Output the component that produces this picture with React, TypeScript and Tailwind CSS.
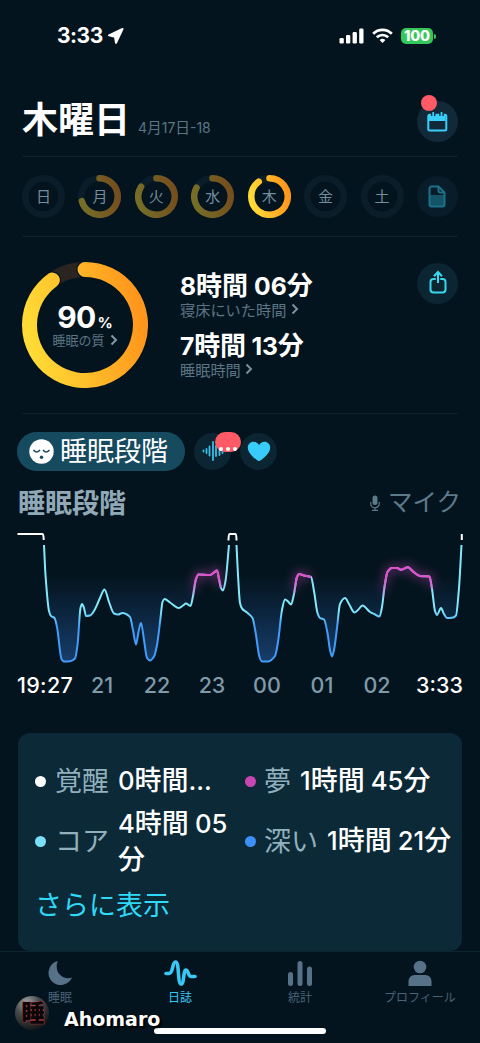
type Point = [number, number];

const DAYS: { label: string; value: number; active?: boolean }[] = [
  { label: "日", value: 0 },
  { label: "月", value: 0.71 },
  { label: "火", value: 0.84 },
  { label: "水", value: 0.83 },
  { label: "木", value: 0.9, active: true },
  { label: "金", value: 0 },
  { label: "土", value: 0 },
];

const HOURS = ["21", "22", "23", "00", "01", "02"];

// first half of the night, up to the short wake up
const NIGHT_A: Point[] = [
  [44, 25], [45.5, 55], [49, 91], [51, 96], [54.5, 98], [57, 107], [61.5, 139], [64, 141.5],
  [70, 141.2], [75, 138.5], [77.5, 125], [80.5, 88], [82, 84], [84, 88], [86, 96], [90, 95.5], [94, 91],
  [100, 78], [104.5, 69.5], [109, 82], [114, 93.5], [118, 94.5], [122.5, 93], [126, 94], [130, 97],
  [133, 110], [136, 124.5], [138.5, 112], [141, 103], [144, 120], [147, 138], [150, 140.5],
  [154, 136.5], [157, 125], [160.5, 98], [162.5, 82], [164.5, 79], [170, 82.5], [179, 88],
  [183, 85.5], [186, 83.5], [190.5, 86], [193, 76], [196, 59], [198.5, 54.5], [210, 55], [214, 52.5],
  [217, 50.5], [219, 59], [221, 68], [223, 70.5], [225.5, 61], [229, 25],
];

const NIGHT_B: Point[] = [
  [236.5, 25], [238, 55], [240, 83], [242, 88.5], [247, 92.5], [252.5, 98], [255.5, 112], [259.5, 137], [262, 141.5],
  [268, 141.5], [275, 136], [278, 122], [282, 90], [285, 79.5], [288, 81.5], [291, 84.5], [294, 74],
  [297, 57], [299, 54], [304, 55.5], [311, 57], [314, 71], [317.5, 93], [320, 98], [324, 99.5],
  [327.5, 113], [330, 130], [332, 136.5], [334, 130], [337, 108], [340, 84], [345, 78], [349, 84],
  [354.5, 92.5], [358, 90], [362.5, 85.5], [370, 92], [375, 94.5], [379.5, 96.5], [382, 87], [384.5, 67], [387.5, 52],
  [392, 48], [397, 48], [401, 49.8], [408, 47.2], [413, 51.5], [420, 56], [429.5, 56.5], [432, 69],
  [435, 91], [437, 95], [441, 88], [444, 94], [447, 98], [452, 97.8], [456, 95.5], [459, 68], [461.5, 25],
];

const REM_RANGES: [Point[], number, number][] = [
  [NIGHT_A, 193, 221],
  [NIGHT_B, 294, 311],
  [NIGHT_B, 382, 432],
];

// joins the points with horizontal tangents limited, so that the line never overshoots
function smooth(points: Point[]): string {
  const slope = points.map((p, i) => {
    if (i === 0 || i === points.length - 1) {
      const [a, b] = i === 0 ? [points[0], points[1]] : [points[i - 1], p];
      return (b[1] - a[1]) / (b[0] - a[0]);
    }
    const before = (p[1] - points[i - 1][1]) / (p[0] - points[i - 1][0]);
    const after = (points[i + 1][1] - p[1]) / (points[i + 1][0] - p[0]);
    return before * after <= 0 ? 0 : (2 * before * after) / (before + after);
  });

  return points.reduce((d, [x, y], i) => {
    if (i === 0) return `M${x} ${y}`;
    const [px, py] = points[i - 1];
    const h = (x - px) / 3;
    return `${d}C${px + h} ${py + slope[i - 1] * h} ${x - h} ${y - slope[i] * h} ${x} ${y}`;
  }, "");
}

// digits are set a bit smaller than the kanji beside them
function Text({ children }: { children: string }) {
  return (
    <>
      {children.split(/([\d.:-]+)/).map((part, i) =>
        i % 2 ? (
          <span key={i} className="text-[0.95em] font-[Inter]">
            {part}
          </span>
        ) : (
          part
        )
      )}
    </>
  );
}

function Ring({ size, stroke, value, track, big }: {
  size: number;
  stroke: number;
  value: number;
  track: string;
  big?: boolean;
}) {
  const r = (size - stroke) / 2;
  const c = size / 2;
  const end = value * Math.PI * 2;
  const x = c + r * Math.sin(end);
  const y = c - r * Math.cos(end);
  const arc = `M${c} ${c - r}A${r} ${r} 0 1 1 ${x} ${y}`;

  return (
    <svg width={size} height={size} fill="none" className="col-start-1 row-start-1">
      <circle cx={c} cy={c} r={r} stroke={track} strokeWidth={stroke} />
      {value > 0 && (
        <>
          {big && <path d={arc} stroke="#04141f" strokeWidth={stroke + 2.5} strokeLinecap="round" />}
          <path d={arc} stroke="url(#gold)" strokeWidth={stroke} strokeLinecap="round" />
        </>
      )}
    </svg>
  );
}

function Chevron({ className }: { className: string }) {
  return (
    <svg viewBox="0 0 8 12" className={className} fill="none" stroke="currentColor" strokeWidth="2">
      <path d="M1.5 1.5 6 6l-4.5 4.5" />
    </svg>
  );
}

function StatusBar() {
  return (
    <div className="flex h-[72px] items-center justify-between pl-[57px] pr-[44px]">
      <div className="flex items-center gap-[4px]">
        <span className="font-[Inter] text-[21px] leading-6 font-bold tracking-[-0.5px]">3:33</span>
        <svg width="18" height="18" viewBox="0 0 18 18" fill="#fff" stroke="#fff" strokeWidth="2" strokeLinejoin="round">
          <path d="M15.500 2 2 8.300 8 9.800 9 15.800Z" />
        </svg>
      </div>
      <div className="flex items-center">
        <svg width="25" height="16" fill="#fff">
          <rect x="0.500" y="10" width="4.300" height="5.500" rx="1.300" />
          <rect x="7" y="7" width="4.300" height="8.500" rx="1.300" />
          <rect x="13.600" y="4" width="4.300" height="11.500" rx="1.300" />
          <rect x="20.200" y="0.500" width="4.300" height="15" rx="1.300" />
        </svg>
        <svg width="21" height="16" viewBox="0 0 21 16" className="ml-[8px]" fill="none" stroke="#fff" strokeWidth="2.700">
          <path d="M1.200 5.700a13.200 13.200 0 0 1 18.600 0M4.800 9.300a8.200 8.200 0 0 1 11.400 0" />
          <path d="M10.500 15 7.600 12.100a4.200 4.200 0 0 1 5.800 0Z" fill="#fff" stroke="none" />
        </svg>
        <div className="ml-2 flex h-4 w-8 items-center justify-center rounded-[5px] bg-[#34c759] font-[Inter] text-[14.5px] font-extrabold leading-none tracking-[-0.2px]">
          100
        </div>
        <div className="ml-px h-[5px] w-[2px] rounded-r-full bg-[#34c759]" />
      </div>
    </div>
  );
}

function Header() {
  return (
    <header className="mx-[22px] flex h-[85px] justify-between border-b border-[#0f202b]">
      <div className="flex items-baseline pt-[19px]">
        <h1 className="text-[36px] leading-[52px] font-bold">木曜日</h1>
        <span className="ml-[8px] text-[14.700px] text-[#5b7584]">
          <Text>4月17日-18</Text>
        </span>
      </div>
      <div className="relative mt-[29px] flex size-[41px] items-center justify-center rounded-full bg-[#12293a]">
        <svg width="21" height="20" fill="none" stroke="#38d0fb" strokeWidth="2">
          <rect x="1.300" y="2.800" width="18" height="15.700" rx="1.500" />
          <path d="M2 3h16.500v6H2z" fill="#38d0fb" stroke="none" />
          <path d="M6.200 0v4M14.500 0v4" stroke="#12293a" strokeWidth="4.500" />
          <path d="M6.200.5v3M14.500.5v3" strokeLinecap="round" strokeWidth="1.800" />
        </svg>
        <span className="absolute -top-[6px] left-[4px] size-[16px] rounded-full bg-[#ff5a66]" />
      </div>
    </header>
  );
}

function Week() {
  return (
    <div className="mx-[22px] flex h-[80px] items-center justify-between border-b border-[#0f202b]">
      {DAYS.map(({ label, value, active }) => (
        <div key={label} className="grid place-items-center">
          <div className={active ? "col-start-1 row-start-1" : "col-start-1 row-start-1 opacity-45"}>
            <Ring size={43} stroke={6.5} value={value} track={active ? "#0b1f2b" : "#122a38"} />
          </div>
          <span className="col-start-1 row-start-1 mb-[3px] text-[15px] leading-none text-[#728d9c]">{label}</span>
        </div>
      ))}
      <div className="flex size-[41px] items-center justify-center rounded-full bg-[#081d29]">
        <svg width="18" height="23" viewBox="0 0 18 23" fill="none" stroke="#1b7287" strokeWidth="2">
          <path d="M2 10h14v11H2z" fill="#155366" stroke="none" />
          <path d="M10.500 1.500H3.500a2 2 0 0 0-2 2v16a2 2 0 0 0 2 2h11a2 2 0 0 0 2-2v-12Z" strokeLinejoin="round" />
          <path d="M10.500 1.500v4a2 2 0 0 0 2 2h4" />
        </svg>
      </div>
    </div>
  );
}

function Summary() {
  return (
    <section className="mx-[22px] flex h-[177px] border-b border-[#0f202b]">
      <div className="mt-[25px] grid h-[126px] w-[126px] place-items-center">
        <Ring size={126} stroke={15} value={0.9} track="#2a2520" big />
        <div className="col-start-1 row-start-1 flex flex-col items-center">
          <div className="flex h-[28px] items-baseline font-[Inter] font-bold leading-[28px]">
            <span className="text-[30px] tracking-[-0.8px]">90</span>
            <span className="ml-[2px] text-[15px]">%</span>
          </div>
          <div className="mt-px flex items-center gap-[5px] text-[13px] leading-4 text-[#5b7584]">
            睡眠の質
            <Chevron className="h-[12px] w-[8px] text-[#8499a5]" />
          </div>
        </div>
      </div>
      <div className="mt-[33px] ml-[32px] flex-1">
        <p className="text-[26px] leading-[28px] font-bold"><Text>8時間 06分</Text></p>
        <p className="flex h-[18px] items-center gap-[5px] text-[15.200px] leading-[18px] text-[#5b7584]">
          寝床にいた時間
          <Chevron className="h-[12px] w-[8px] text-[#7b919d]" />
        </p>
        <p className="mt-[12px] text-[26px] leading-[28px] font-bold tracking-[-0.2px]"><Text>7時間 13分</Text></p>
        <p className="flex h-[18px] items-center gap-[4px] text-[15.200px] leading-[18px] text-[#5b7584]">
          睡眠時間
          <Chevron className="h-[12px] w-[8px] text-[#7b919d]" />
        </p>
      </div>
      <button className="mt-[26px] flex size-[41px] items-center justify-center rounded-full bg-[#0b2532]">
        <svg width="18" height="24" viewBox="0 0 18 24" fill="none" stroke="#38d7f0" strokeWidth="2" className="-mt-[3px]">
          <path d="M6 9H4.500a3 3 0 0 0-3 3v7.500a3 3 0 0 0 3 3h9a3 3 0 0 0 3-3V12a3 3 0 0 0-3-3H12" strokeLinecap="round" />
          <path d="M9 13V2.500M5 6.200 9 2l4 4.200" />
        </svg>
      </button>
    </section>
  );
}

function Tabs() {
  return (
    <div className="mt-[17px] ml-[17px] flex h-[40px] items-center">
      <div className="flex h-[39px] w-[168px] items-center rounded-full bg-[#164a5f] pl-[12px]">
        <svg width="25" height="25" viewBox="0 0 25 25" fill="none" stroke="#164a5f" strokeWidth="1.700" strokeLinecap="round">
          <circle cx="12.500" cy="12.500" r="12.200" fill="#fff" stroke="none" />
          <path d="M5 11.500q2.500 3 5.500 0M14.500 11.500q2.500 3 5.500 0" />
          <circle cx="12.500" cy="18.300" r="1.700" fill="#164a5f" stroke="none" />
        </svg>
        <span className="mb-[4px] ml-[6px] text-[27px] leading-[35px]">睡眠段階</span>
      </div>
      <div className="relative ml-[9px] flex size-[37px] items-center justify-center rounded-full bg-[#0b2532]">
        <svg width="22" height="20" stroke="#38bfe8" strokeWidth="1.800" strokeLinecap="round">
          <path d="M1.500 9.500v1M4.500 8v4M7.500 5.500v9M11 1v18M14 5v10M17.500 6v8M20.500 8v4" />
        </svg>
        <span className="absolute -top-px left-[21px] flex h-[20px] w-[26px] items-end justify-center gap-[3px] rounded-full bg-[#ff5a66] pb-px">
          <i className="size-[4px] rounded-full bg-white" />
          <i className="size-[4px] rounded-full bg-white" />
          <i className="size-[4px] rounded-full bg-white" />
        </span>
      </div>
      <div className="ml-[9px] flex size-[37px] items-center justify-center rounded-full bg-[#0b2532]">
        <svg width="24" height="21" viewBox="0 0 24 21" fill="#38ccfb">
          <path d="M12 20.200C10.800 20.200.8 13.200.8 6.800.8 3.200 3.400.8 6.500.8c2.400 0 4.300 1.300 5.500 3.300C13.200 2.100 15.100.8 17.500.8c3.100 0 5.700 2.400 5.700 6 0 6.400-10 13.400-11.200 13.400Z" />
        </svg>
      </div>
    </div>
  );
}

function Chart() {
  return (
    <svg width="480" height="148" viewBox="0 0 480 148" fill="none" className="block">
      <defs>
        <linearGradient id="line" gradientUnits="userSpaceOnUse" x1="0" y1="90" x2="0" y2="106">
          <stop offset="0" stopColor="#82e9fb" />
          <stop offset="1" stopColor="#429dfa" />
        </linearGradient>
        <linearGradient id="valley" gradientUnits="userSpaceOnUse" x1="0" y1="55" x2="0" y2="142">
          <stop offset="0" stopColor="#143a66" stopOpacity="0" />
          <stop offset="1" stopColor="#173d6b" />
        </linearGradient>
        <linearGradient id="rem" gradientUnits="userSpaceOnUse" x1="0" y1="58" x2="0" y2="80">
          <stop offset="0" stopColor="#e14fcb" />
          <stop offset="1" stopColor="#e14fcb" stopOpacity="0" />
        </linearGradient>
        <filter id="glow" x="-50%" y="-50%" width="200%" height="200%">
          <feGaussianBlur stdDeviation="5" />
        </filter>
      </defs>
      {[NIGHT_A, NIGHT_B].map((night, i) => (
        <g key={i}>
          <path d={`${smooth(night)}Z`} fill="url(#valley)" />
          <path d={smooth(night)} stroke="url(#line)" strokeWidth="2" />
        </g>
      ))}
      {REM_RANGES.map(([night, from, to]) => {
        const d = smooth(night.filter(([x]) => x >= from && x <= to));
        return (
          <g key={from}>
            <path d={d} stroke="url(#rem)" strokeWidth="7" opacity="0.35" filter="url(#glow)" />
            <path d={d} stroke="url(#rem)" strokeWidth="2.200" />
          </g>
        );
      })}
      {/* awake */}
      <path d="M17.500 14H42.500q1.200 0 1.200 6M228.500 20.500q0-6.500 1-6.500h6q1 0 1 6.500M461.800 14v6" stroke="#fff" strokeWidth="2" />
    </svg>
  );
}

function Stages() {
  return (
    <section>
      <div className="mt-[10px] mr-[19px] ml-[18px] flex h-[39px] items-center justify-between">
        <h2 className="mt-px text-[27px] leading-[39px] font-bold text-[#91a9b7]">睡眠段階</h2>
        <div className="flex items-center text-[#5c7a8a]">
          <svg width="10" height="16" viewBox="0 0 10 16" fill="none" stroke="currentColor" className="mt-[5px]">
            <rect x="2.500" y="0.500" width="5" height="9.500" rx="2.500" fill="currentColor" stroke="none" />
            <path d="M.7 7v1.500a4.300 4.300 0 0 0 8.600 0V7M5 13v2M2 15.300h6" strokeWidth="1.200" />
          </svg>
          <span className="ml-[8px] text-[24.500px] leading-[39px]">マイク</span>
        </div>
      </div>
      <Chart />
      <div className="mx-[17px] grid h-[34px] grid-cols-[57.5px_repeat(6,55px)_1fr] items-center text-center font-[Inter] text-[21.500px] font-medium">
        <span className="text-left tracking-[0.3px]">19:27</span>
        {HOURS.map((hour) => (
          <span key={hour} className="text-[#7f9aa8]">{hour}</span>
        ))}
        <span className="text-right">3:33</span>
      </div>
    </section>
  );
}

function Legend() {
  return (
    <section className="mx-[18px] mt-[31px] h-[218px] rounded-[12px] bg-[#0b2937] pl-[17px] text-[27px] leading-[34px]">
      <div className="grid grid-cols-[210px_1fr] grid-rows-[60px_60px] pt-[17px] whitespace-nowrap">
        <div className="flex items-center">
          <i className="mt-[2px] size-[11px] rounded-full bg-white" />
          <span className="ml-[9px] text-[#91afbc]">覚醒</span>
          <span className="ml-[9px] font-medium"><Text>0時間...</Text></span>
        </div>
        <div className="flex items-center">
          <i className="mt-[2px] size-[11px] rounded-full bg-[#c846b4]" />
          <span className="ml-[8px] text-[#91afbc]">夢</span>
          <span className="ml-[9px] font-medium"><Text>1時間 45分</Text></span>
        </div>
        <div className="flex items-center">
          <i className="mt-[2px] size-[11px] rounded-full bg-[#7bdffa]" />
          <span className="ml-[9px] text-[#91afbc]">コア</span>
          <span className="ml-[9px] font-medium">
            <Text>4時間 05</Text>
            <br />分
          </span>
        </div>
        <div className="flex items-center">
          <i className="mt-[2px] size-[11px] rounded-full bg-[#3d8ffa]" />
          <span className="ml-[8px] text-[#91afbc]">深い</span>
          <span className="ml-[9px] font-medium"><Text>1時間 21分</Text></span>
        </div>
      </div>
      <a className="mt-[17px] block text-[#2fd9f7]">さらに表示</a>
    </section>
  );
}

function NavBar() {
  return (
    <nav className="grid h-[92px] grid-cols-4 border-t border-[#0d2531] text-[12px] leading-[16px] text-[#4a6277]">
      <div className="flex flex-col items-center pt-[8px]">
        <svg width="25" height="26" viewBox="0 0 25 26" fill="#577188">
          <path d="M8.800 1.300A12.200 12.200 0 1 0 24 17.500C15 20.500 6 12.500 9.400 2c.2-.6 0-.9-.6-.7Z" />
        </svg>
        <span className="mt-[3px]">睡眠</span>
      </div>
      <div className="flex flex-col items-center pt-[8px] text-[#38c8f5]">
        <svg width="33" height="26" viewBox="0 0 33 26" fill="none" stroke="currentColor" strokeWidth="3.600" strokeLinecap="round" strokeLinejoin="round">
          <path d="M2 13.500h3c4.500 0 3-11.500 6.500-11.500 4 0 2 22 5.500 22s2-14 5-14c2.500 0 2 6.500 5 6.500h4" />
        </svg>
        <span className="mt-[3px]">日誌</span>
      </div>
      <div className="flex flex-col items-center pt-[8px]">
        <svg width="26" height="26" fill="#577188">
          <rect x="1" y="12" width="5" height="14" rx="2.500" />
          <rect x="10.500" y="1" width="5" height="25" rx="2.500" />
          <rect x="20" y="6.500" width="5" height="19.500" rx="2.500" />
        </svg>
        <span className="mt-[3px]">統計</span>
      </div>
      <div className="flex flex-col items-center pt-[8px]">
        <svg width="24" height="26" fill="#577188">
          <circle cx="12" cy="7" r="6.300" />
          <path d="M.5 26v-5a6 6 0 0 1 6-6h11a6 6 0 0 1 6 6v5Z" />
        </svg>
        <span className="mt-[3px]">プロフィール</span>
      </div>
    </nav>
  );
}

export default function App() {
  return (
    <main className="relative flex h-[1043px] w-[480px] flex-col overflow-hidden bg-[#04141e] font-['Noto_Sans_CJK_JP',sans-serif] text-white">
      <svg width="0" height="0" className="absolute">
        <linearGradient id="gold" x1="0" y1="0.600" x2="1" y2="0.400">
          <stop offset="0" stopColor="#ffdb35" />
          <stop offset="1" stopColor="#ff961c" />
        </linearGradient>
      </svg>
      <StatusBar />
      <Header />
      <Week />
      <Summary />
      <Tabs />
      <Stages />
      <Legend />
      <NavBar />

      <div className="absolute bottom-[9px] left-[154px] h-[6px] w-[172px] rounded-full bg-white" />

      {/* signature */}
      <div className="absolute bottom-[12px] left-[14px] flex items-center">
        <svg width="36" height="36" viewBox="0 0 36 36" overflow="visible">
          <defs>
            <radialGradient id="ball" cx="0.350" cy="0.200" r="0.800">
              <stop offset="0" stopColor="#a2a6a8" />
              <stop offset="0.450" stopColor="#484b4d" />
              <stop offset="1" stopColor="#16191b" />
            </radialGradient>
          </defs>
          <circle cx="18" cy="18" r="17" fill="url(#ball)" />
          <text x="19" y="26" textAnchor="middle" fontSize="23" fontWeight="900" fill="#080808" stroke="#c02c36" strokeWidth="0.800" paintOrder="stroke">
            睡
          </text>
        </svg>
        <span className="mt-[11px] ml-[14px] font-['DejaVu_Sans'] text-[19px] leading-5 font-bold [text-shadow:2px_2px_2px_#000]">
          Ahomaro
        </span>
      </div>
    </main>
  );
}
